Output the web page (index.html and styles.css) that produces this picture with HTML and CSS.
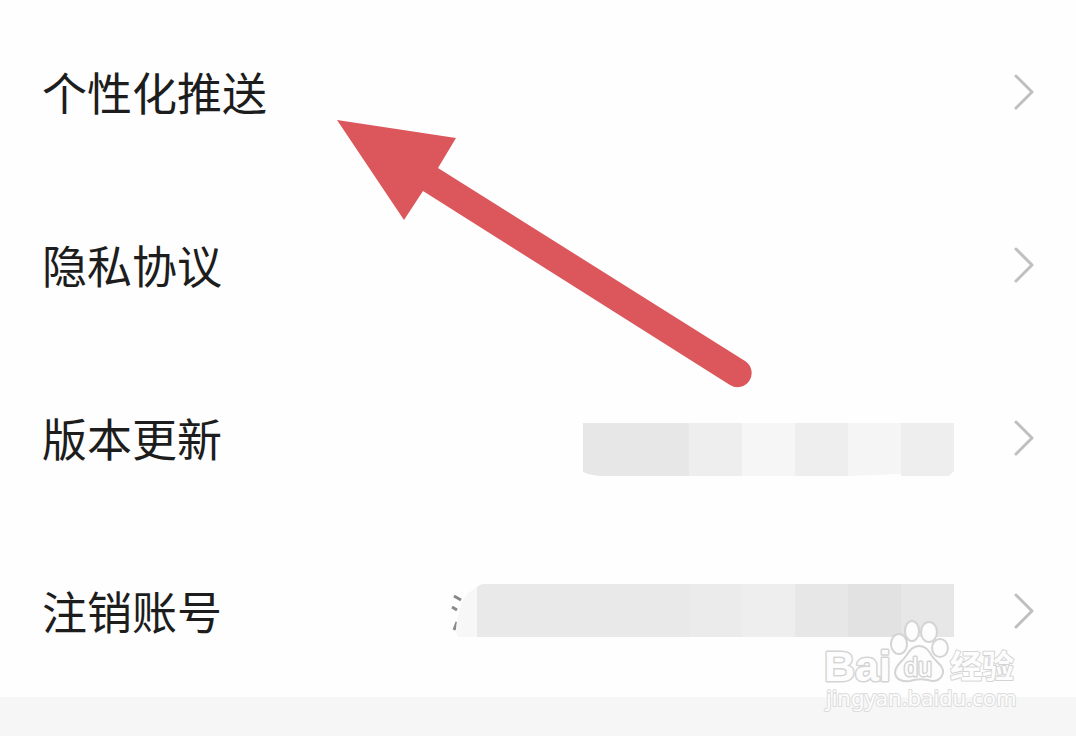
FILE: index.html
```
<!DOCTYPE html>
<html lang="zh-CN">
<head>
  <meta charset="UTF-8">
  <meta name="viewport" content="width=device-width, initial-scale=1">
  <title>设置</title>
  <link rel="stylesheet" href="styles.css">
</head>
<body>
  <main class="settings">
    <a class="row" href="#push">
      <span class="row-label">个性化推送</span>
      <svg class="chevron" viewBox="0 0 20 36"><path d="M2 2 L18 18 L2 34"/></svg>
    </a>
    <a class="row" href="#privacy">
      <span class="row-label">隐私协议</span>
      <svg class="chevron" viewBox="0 0 20 36"><path d="M2 2 L18 18 L2 34"/></svg>
    </a>
    <a class="row" href="#version">
      <span class="row-label">版本更新</span>
      <svg class="mosaic mosaic-version" viewBox="0 0 371 53">
        <path fill="#e7e7e7" d="M0 0H106V53H22Q8 53 0 49Z"/>
        <path fill="#eee" d="M106 0H159V53H106Z"/>
        <path fill="#f6f6f6" d="M159 0H212V53H159Z"/>
        <path fill="#eee" d="M212 0H265V53H212Z"/>
        <path fill="#f5f5f5" d="M265 0H318V51L265 53Z"/>
        <path fill="#eee" d="M318 0H371V48L366 53H318Z"/>
      </svg>
      <svg class="chevron" viewBox="0 0 20 36"><path d="M2 2 L18 18 L2 34"/></svg>
    </a>
    <a class="row" href="#account">
      <span class="row-label">注销账号</span>
      <svg class="mosaic mosaic-account" viewBox="0 0 504 53">
        <path class="stroke" d="M4 12L11 16M2 23L7 26M4 46L7 38"/>
        <path fill="#f7f7f7" d="M27 0V53H8Q4 46 8 34Q10 12 27 3Z"/>
        <path fill="#e9e9e9" d="M27 3Q30 0 34 0H240V53H27Z"/>
        <path fill="#ebebeb" d="M240 0H292V53H240Z"/>
        <path fill="#eee" d="M292 0H345V53H292Z"/>
        <path fill="#e7e7e7" d="M345 0H398V53H345Z"/>
        <path fill="#e2e2e2" d="M398 0H451V53H398Z"/>
        <path fill="#e7e7e7" d="M451 0H504V53H451Z"/>
      </svg>
      <svg class="chevron" viewBox="0 0 20 36"><path d="M2 2 L18 18 L2 34"/></svg>
    </a>

    <svg class="pointer" viewBox="0 0 415 268">
      <path d="M0 0L119 18L101 48L408 241A14 14 0 0 1 393 265L86 71L67 100Z"/>
    </svg>
  </main>

  <!-- watermark -->
  <svg class="watermark" viewBox="0 0 200 96">
    <text class="wm-bai" x="4" y="62">Bai</text>
    <ellipse cx="79" cy="25" rx="8" ry="10"/>
    <ellipse cx="92" cy="12" rx="7" ry="10"/>
    <ellipse cx="109" cy="13" rx="8" ry="10"/>
    <ellipse cx="120" cy="29" rx="8" ry="9"/>
    <path d="M99 27C106 27 109 32 112 37C117 44 124 47 123 54C121 62 114 63 108 61C102 60 96 60 90 62C83 63 76 61 75 54C75 46 82 43 86 37C90 31 93 27 99 27Z"/>
    <text class="wm-du" x="84" y="57">du</text>
    <text class="wm-name" x="130" y="59">经验</text>
    <text class="wm-url" x="6" y="87">jingyan.baidu.com</text>
  </svg>
</body>
</html>
```
FILE: styles.css
```
* {
  box-sizing: border-box;
}
body {
  position: relative;
  min-height: 100vh;
  margin: 0;
  background: #f6f6f6;
  color: #1d1d1d;
  font-family: "Noto Sans CJK SC", sans-serif;
}
.settings {
  position: relative;
  padding-top: 5px;
  background: #fefefe;
}
.row {
  display: flex;
  align-items: center;
  height: 173px;
  padding: 0 42px;
  color: inherit;
  text-decoration: none;
}
.row-label {
  flex: 1;
  font-size: 45px;
  line-height: 64px;
}
.chevron {
  width: 20px;
  height: 36px;
  margin-left: 60px;
  fill: none;
  stroke: #bfbfbf;
  stroke-width: 3;
  stroke-linecap: round;
  stroke-linejoin: round;
}
.mosaic {
  height: 53px;
}
.mosaic-version {
  width: 371px;
  margin-top: 24px;
}
.mosaic-account {
  width: 504px;
}
.mosaic .stroke {
  fill: none;
  stroke: #888;
  stroke-width: 3;
}
.pointer {
  position: absolute;
  top: 120px;
  left: 337px;
  width: 415px;
  fill: #dc575c;
  pointer-events: none;
}
.watermark {
  position: absolute;
  top: 619px;
  right: 56px;
  width: 200px;
  height: 96px;
  fill: #fdfdfd;
  stroke: #d4d4d4;
  stroke-width: 2;
  stroke-linejoin: round;
  pointer-events: none;
}
.watermark text {
  paint-order: stroke;
}
.wm-bai {
  font: bold 43px "Liberation Sans", sans-serif;
  stroke-width: 3;
}
.wm-du {
  font: 25px "Liberation Sans", sans-serif;
  stroke-width: 3;
}
.wm-name {
  font: bold 32px "Noto Sans CJK SC", sans-serif;
}
.wm-url {
  font: 22px "Noto Sans", sans-serif;
  stroke: #dcdcdc;
}
```
